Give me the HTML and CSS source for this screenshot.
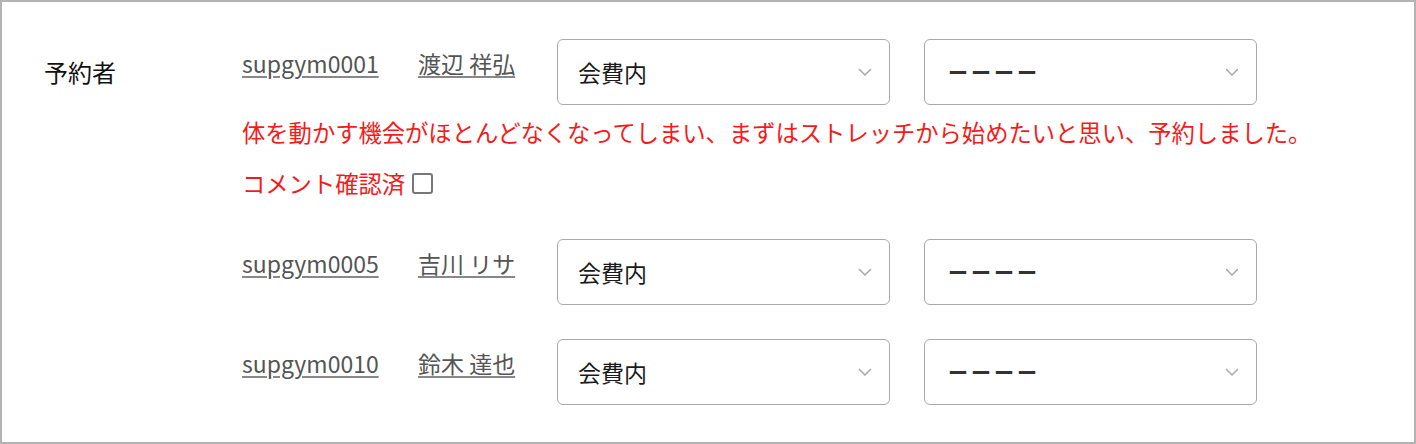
FILE: index.html
```html
<!DOCTYPE html>
<html lang="ja">
<head>
    <meta charset="UTF-8">
    <meta name="viewport" content="width=device-width, initial-scale=1.0">
    <title>予約者</title>
    <link rel="stylesheet" href="styles.css">
</head>
<body>
    <div class="frame">
        <div class="field">
            <div class="field-label">予約者</div>
            <div class="members">

                <!-- 予約者 1 (コメントあり) -->
                <div class="member">
                    <div class="member-row">
                        <a class="member-id" href="#">supgym0001</a>
                        <a class="member-name" href="#">渡辺 祥弘</a>
                        <div class="select">
                            <span>会費内</span>
                            <svg width="14" height="8" viewBox="0 0 14 8"><path d="M1 1l6 6 6-6" /></svg>
                        </div>
                        <div class="select">
                            <span class="dashes">ーーーー</span>
                            <svg width="14" height="8" viewBox="0 0 14 8"><path d="M1 1l6 6 6-6" /></svg>
                        </div>
                    </div>
                    <p class="comment">体を動かす機会がほとんどなくなってしまい、まずはストレッチから始めたいと思い、予約しました。</p>
                    <label class="comment-check">コメント確認済<input type="checkbox"></label>
                </div>

                <div class="member">
                    <div class="member-row">
                        <a class="member-id" href="#">supgym0005</a>
                        <a class="member-name" href="#">吉川 リサ</a>
                        <div class="select">
                            <span>会費内</span>
                            <svg width="14" height="8" viewBox="0 0 14 8"><path d="M1 1l6 6 6-6" /></svg>
                        </div>
                        <div class="select">
                            <span class="dashes">ーーーー</span>
                            <svg width="14" height="8" viewBox="0 0 14 8"><path d="M1 1l6 6 6-6" /></svg>
                        </div>
                    </div>
                </div>

                <div class="member">
                    <div class="member-row">
                        <a class="member-id" href="#">supgym0010</a>
                        <a class="member-name" href="#">鈴木 達也</a>
                        <div class="select">
                            <span>会費内</span>
                            <svg width="14" height="8" viewBox="0 0 14 8"><path d="M1 1l6 6 6-6" /></svg>
                        </div>
                        <div class="select">
                            <span class="dashes">ーーーー</span>
                            <svg width="14" height="8" viewBox="0 0 14 8"><path d="M1 1l6 6 6-6" /></svg>
                        </div>
                    </div>
                </div>

            </div>
        </div>
    </div>
</body>
</html>
```

FILE: styles.css
```css
body {
    margin: 0;
    font-family: "Noto Sans CJK JP", "Noto Sans", sans-serif;
    background: #fff;
    color: #222;
}
.frame {
    box-sizing: border-box;
    width: 1416px;
    height: 444px;
    border: 2px solid #b3b3b3;
    padding: 37px 0 0 42px;
    overflow: hidden;
}
.field {
    display: flex;
}
.field-label {
    width: 198px;
    font-size: 24px;
    line-height: 66px;
    color: #111;
}
.members {
    display: flex;
    flex-direction: column;
    gap: 34px;
}
.member-row {
    display: flex;
    align-items: flex-start;
}
.member-id,
.member-name {
    font-size: 23px;
    line-height: 32px;
    margin-top: 8px;
    color: #555;
    text-decoration: underline;
    text-decoration-color: #888;
    text-underline-offset: 3px;
}
.member-id {
    width: 176px;
}
.member-name {
    width: 139px;
}
.select {
    box-sizing: border-box;
    width: 333px;
    height: 66px;
    border: 1px solid #aaa;
    border-radius: 6px;
    display: flex;
    align-items: center;
    justify-content: space-between;
    padding: 0 17px 0 20px;
    font-size: 23px;
    color: #1a1a1a;
}
.select + .select {
    margin-left: 34px;
}
.select svg path {
    fill: none;
    stroke: #a8a8a8;
    stroke-width: 1.5;
}
.dashes {
    font-size: 20px;
    font-weight: 700;
    letter-spacing: 3px;
    padding-left: 3px;
    color: #333;
}
.comment {
    margin: 10px 0 0;
    font-size: 23.3px;
    line-height: 34px;
    color: #f51b1b;
}
.comment-check {
    display: flex;
    align-items: center;
    margin-top: 17px;
    margin-bottom: 5px;
    font-size: 23.3px;
    line-height: 34px;
    color: #f51b1b;
}
.comment-check input {
    appearance: none;
    box-sizing: border-box;
    width: 21px;
    height: 21px;
    margin: 0 0 0 7px;
    border: 2px solid #777;
    border-radius: 3px;
    background: #fff;
}
```
